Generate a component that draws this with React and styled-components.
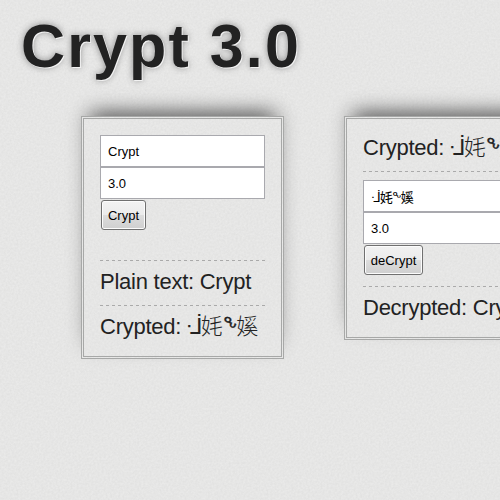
import React from "react";
import styled, { createGlobalStyle } from "styled-components";

const grain = (freq, amp, base) =>
  `url("data:image/svg+xml,${encodeURIComponent(
    `<svg xmlns='http://www.w3.org/2000/svg' width='250' height='250'><filter id='n' x='0' y='0' width='100%' height='100%' color-interpolation-filters='sRGB'><feTurbulence type='fractalNoise' baseFrequency='${freq}' numOctaves='3' stitchTiles='stitch'/><feColorMatrix values='${amp} 0 0 0 ${base} ${amp} 0 0 0 ${base} ${amp} 0 0 0 ${base - 0.003} 0 0 0 0 1'/></filter><rect width='250' height='250' filter='url(#n)'/></svg>`
  )}")`;
const paper = grain(0.48, 0.05, 0.876);

const Global = createGlobalStyle`
  * { box-sizing: border-box; }
  html { background: #e5e5e4 ${paper}; overflow: hidden; }
  body { margin: 0; height: 500px; overflow: hidden; color: #222; font-family: "Liberation Sans", Arial, "DejaVu Sans", "Noto Sans CJK SC", sans-serif; }
`;
const Title = styled.h1`
  margin: 0; padding: 10px 0 0 21px; height: 116px;
  font-size: 61px; line-height: 72px; letter-spacing: 2.1px; white-space: nowrap;
  text-shadow: 1px 1px 0 #f2f2f2, 0 0 7px #888;
`;
const Panels = styled.main`
  display: flex; align-items: flex-start; gap: 60px; padding-left: 81px;
`;
const Panel = styled.section`
  flex: none; width: 203px; height: ${(p) => p.$height}px; padding: 16px;
  border: 3px double #a7a8a7;
  background: #e5e5e4 ${paper};
  box-shadow: 0 -16px 18px -14px #666, 0 -9px 18px -4px rgba(0,0,0,.27);
`;
const Field = styled.input`
  display: block; width: 165px; height: 32px; padding: 0 7px;
  border: 1px solid #a9a9ae; border-radius: 0; background: #fff; color: #000;
  font: 13px "Liberation Sans", "DejaVu Sans", "Noto Sans CJK SC", sans-serif; outline: 0;
  letter-spacing: ${(p) => p.$tracking || "0"};
`;
const Button = styled.button`
  display: block; margin: 1px; width: ${(p) => p.$width}px; height: 30px; padding: 0;
  border: 1px solid #707070; border-radius: 3px;
  background: linear-gradient(#f2f2f2, #ebebeb 50%, #ddd 50%, #cfcfcf);
  box-shadow: inset 0 0 0 1px #fcfcfc;
  color: #000; font: 13px "Liberation Sans", sans-serif;
`;
const Line = styled.p`
  margin: ${(p) => p.$margin || "0"}; height: 45px; padding-top: 1px; line-height: 42px;
  font-size: 22px; letter-spacing: -0.25px; white-space: nowrap;
  background: repeating-linear-gradient(90deg, #aaa 0 3px, transparent 3px 6px) 0 0 / 100% 1px no-repeat;
`;
const Heading = styled(Line)`
  margin: -8px 0 8px; padding-top: 0;
  background-position: 0 100%;
`;
const CipherText = styled.span`
  margin-left: -1px; letter-spacing: -0.9px;
  font-family: "DejaVu Sans", "Noto Sans CJK SC", sans-serif; font-weight: 300;
`;
const Raised = styled.span`
  display: inline-block; line-height: 1;
  transform: rotate(18deg); transform-origin: 50% 30%;
  -webkit-text-stroke: 0.3px #222;
`;

const cipher = "ᒴ㚪ᖕ㜎";

function Cipher() {
  return (
    <CipherText>
      ᒴ㚪<Raised>ᖕ</Raised>㜎
    </CipherText>
  );
}

export default function App() {
  return (
    <>
      <Global />
      <Title>Crypt 3.0</Title>
      <Panels>
        <Panel $height={243}>
          <Field defaultValue="Crypt" />
          <Field defaultValue="3.0" />
          <Button $width={45}>Crypt</Button>
          <Line $margin="30px 0 0">Plain text: Crypt</Line>
          <Line>Crypted: <Cipher /></Line>
        </Panel>
        <Panel $height={224}>
          <Heading>Crypted: <Cipher /></Heading>
          <Field defaultValue={cipher} $tracking="-0.7px" />
          <Field defaultValue="3.0" />
          <Button $width={59}>deCrypt</Button>
          <Line $margin="11px 0 0">Decrypted: Crypt</Line>
        </Panel>
      </Panels>
    </>
  );
}
